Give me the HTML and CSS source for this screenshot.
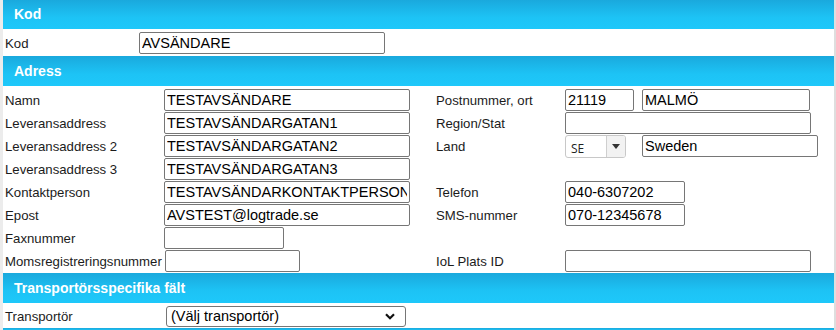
FILE: index.html
```html
<!DOCTYPE html>
<html lang="sv">
<head>
<meta charset="utf-8">
<title>Avsändare</title>
<link rel="stylesheet" href="styles.css">
</head>
<body>
<div class="page">
  <div class="section-head head-first">Kod</div>
  <div class="single-row">
    <span class="lbl kod-lbl">Kod</span>
    <input class="in w246" type="text" value="AVSÄNDARE">
  </div>

  <div class="section-head">Adress</div>
  <div class="adress">
    <span class="lbl">Namn</span>
    <div class="cell"><input class="in w246" type="text" value="TESTAVSÄNDARE"></div>
    <span class="lbl rlbl">Postnummer, ort</span>
    <div class="cell pair"><input class="in w69" type="text" value="21119"><input class="in w168" type="text" value="MALMÖ"></div>

    <span class="lbl">Leveransaddress</span>
    <div class="cell"><input class="in w246" type="text" value="TESTAVSÄNDARGATAN1"></div>
    <span class="lbl rlbl">Region/Stat</span>
    <div class="cell"><input class="in w246" type="text" value=""></div>

    <span class="lbl">Leveransaddress 2</span>
    <div class="cell"><input class="in w246" type="text" value="TESTAVSÄNDARGATAN2"></div>
    <span class="lbl rlbl">Land</span>
    <div class="cell pair">
      <div class="combo"><span class="combo-val">SE</span><span class="combo-btn"><svg width="8" height="5" viewBox="0 0 8 5"><path d="M0 0H8L4 5Z" fill="#333"/></svg></span></div>
      <input class="in w176" type="text" value="Sweden">
    </div>

    <span class="lbl">Leveransaddress 3</span>
    <div class="cell"><input class="in w246" type="text" value="TESTAVSÄNDARGATAN3"></div>
    <span class="lbl rlbl"></span>
    <div class="cell"></div>

    <span class="lbl">Kontaktperson</span>
    <div class="cell"><input class="in w246" type="text" value="TESTAVSÄNDARKONTAKTPERSON"></div>
    <span class="lbl rlbl">Telefon</span>
    <div class="cell"><input class="in w120" type="text" value="040-6307202"></div>

    <span class="lbl">Epost</span>
    <div class="cell"><input class="in w246" type="text" value="AVSTEST@logtrade.se"></div>
    <span class="lbl rlbl">SMS-nummer</span>
    <div class="cell"><input class="in w120" type="text" value="070-12345678"></div>

    <span class="lbl">Faxnummer</span>
    <div class="cell"><input class="in w120" type="text" value=""></div>
    <span class="lbl rlbl"></span>
    <div class="cell"></div>

    <span class="lbl">Momsregistreringsnummer</span>
    <div class="cell"><input class="in w135 shift1" type="text" value=""></div>
    <span class="lbl rlbl">IoL Plats ID</span>
    <div class="cell"><input class="in w246" type="text" value=""></div>
  </div>

  <div class="section-head">Transportörsspecifika fält</div>
  <div class="single-row transp-row">
    <span class="lbl transp-lbl">Transportör</span>
    <div class="sel">
      <span class="sel-text">(Välj transportör)</span>
      <svg class="chev" width="10" height="7" viewBox="0 0 10 7"><path d="M1 1.2L5 5.2L9 1.2" fill="none" stroke="#111" stroke-width="2.2"/></svg>
    </div>
  </div>
  <div class="section-head tail"></div>
</div>
</body>
</html>
```

FILE: styles.css
```css
* { box-sizing: border-box; }

html, body {
  margin: 0;
  padding: 0;
  background: #ffffff;
}

body {
  font-family: "Liberation Sans", Arial, sans-serif;
  color: #1b1b1b;
  width: 836px;
  height: 330px;
  overflow: hidden;
}

.page {
  width: 836px;
  border-left: 3px solid #ececec;
  border-right: 2px solid #dedede;
  min-height: 330px;
}

.section-head {
  height: 30px;
  background: linear-gradient(to bottom, #1aa9dd 0%, #1dc3f5 60%, #1ec8fa 100%);
  color: #ffffff;
  font-weight: bold;
  font-size: 14px;
  line-height: 30px;
  padding-left: 11px;
}

.head-first {
  height: 29px;
  line-height: 29px;
}

.tail {
  height: 4px;
}

.lbl {
  font-size: 13.2px;
  color: #1b1b1b;
  padding-left: 2px;
  white-space: nowrap;
}

.rlbl {
  padding-left: 0;
}

.single-row {
  display: flex;
  align-items: center;
  height: 27px;
  padding-top: 1px;
}

.kod-lbl {
  width: 136px;
}

.transp-row {
  height: 25px;
  padding-top: 1px;
}

.transp-lbl {
  width: 162px;
}

.in {
  height: 22px;
  border: 1px solid #767676;
  border-radius: 2px;
  padding: 0 2px;
  font-family: "Liberation Sans", Arial, sans-serif;
  font-size: 14.5px;
  color: #000000;
  background: #ffffff;
  outline: none;
  margin: 0;
}

.w246 { width: 246px; }
.w69 { width: 69px; }
.w168 { width: 168px; }
.w176 { width: 176px; }
.w120 { width: 120px; }
.w135 { width: 135px; }
.shift1 { margin-left: 1px; }

.adress {
  display: grid;
  grid-template-columns: 161px 272px 129px 1fr;
  grid-auto-rows: 23px;
  padding: 2px 0 1px 0;
}

.adress .lbl {
  align-self: center;
  padding-top: 1px;
}

.cell {
  padding-top: 1px;
}

.pair {
  display: flex;
  gap: 8px;
}

.combo {
  width: 61px;
  height: 23px;
  margin-right: 8px;
  border: 1px solid #c8c8c8;
  border-radius: 3px;
  display: flex;
  align-items: stretch;
  overflow: hidden;
  background: #ffffff;
}

.combo-val {
  flex: 1;
  font-family: "Open Sans", "Liberation Sans", sans-serif;
  font-size: 12px;
  line-height: 22px;
  padding-left: 5px;
  padding-top: 2px;
  color: #222;
}

.combo-btn {
  width: 19px;
  background: #f2f2f2;
  border-left: 1px solid #cfcfcf;
  display: flex;
  align-items: center;
  justify-content: center;
}

.sel {
  position: relative;
  width: 240px;
  height: 21px;
  margin-left: 1px;
  border: 1px solid #767676;
  border-radius: 3px;
  background: #ffffff;
  display: flex;
  align-items: center;
  padding-left: 4px;
}

.sel-text {
  font-size: 14.5px;
  color: #000;
}

.chev {
  position: absolute;
  right: 10px;
  top: 6px;
}
```
